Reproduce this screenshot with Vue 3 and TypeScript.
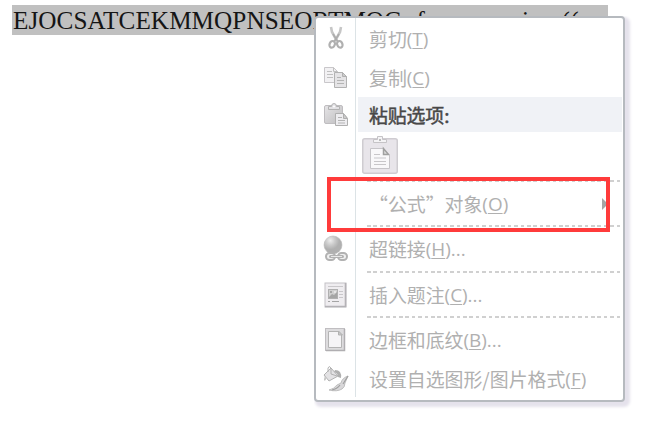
<script setup lang="ts">
interface Entry {
  kind: 'item' | 'header' | 'paste' | 'sep'
  icon?: string
  label?: string
  key?: string
  tail?: string
  height: number
  submenu?: boolean
}

const entries: Entry[] = [
  { kind: 'item', icon: 'cut', label: '剪切', key: 'T', height: 41 },
  { kind: 'item', icon: 'copy', label: '复制', key: 'C', height: 38 },
  { kind: 'header', icon: 'paste', label: '粘贴选项:', height: 35 },
  { kind: 'paste', height: 48 },
  { kind: 'sep', height: 2 },
  { kind: 'item', label: '“公式”对象', key: 'O', height: 43, submenu: true },
  { kind: 'sep', height: 2 },
  { kind: 'item', icon: 'link', label: '超链接', key: 'H', tail: '...', height: 44 },
  { kind: 'sep', height: 2 },
  { kind: 'item', icon: 'caption', label: '插入题注', key: 'C', tail: '...', height: 43 },
  { kind: 'sep', height: 2 },
  { kind: 'item', icon: 'border', label: '边框和底纹', key: 'B', tail: '...', height: 43 },
  { kind: 'item', icon: 'format', label: '设置自选图形/图片格式', key: 'F', height: 36 },
]
</script>

<template>
  <main class="page">
    <p class="doc"><span class="code">EJOCSATCEKMMQPNSEORTMOG</span><span class="tail">from evening ((</span></p>

    <div class="menu">
      <div
        v-for="(e, i) in entries"
        :key="i"
        class="row"
        :class="e.kind"
        :style="{ height: e.height + 'px' }"
      >
        <div class="gutter">
          <svg v-if="e.icon" class="icon" width="28" height="28" viewBox="0 0 28 28">
            <g v-if="e.icon === 'cut'" fill="none" stroke="#b0b0b0">
              <path d="M9 2l1 5 5 9M19 2l-1 5-5 9" stroke="#c6c6c6" stroke-width="2.600" />
              <path d="M11 9l5 8M17 9l-5 8" stroke="#adadad" stroke-width="1.500" />
              <ellipse cx="10.200" cy="19.300" rx="2.600" ry="3.400" stroke-width="2.200" transform="rotate(25 10.2 19.3)" />
              <ellipse cx="17.800" cy="19.300" rx="2.600" ry="3.400" stroke-width="2.200" transform="rotate(-25 17.8 19.3)" />
            </g>
            <g v-else-if="e.icon === 'copy'" stroke-width="1">
              <path d="M2.500 3.500h9l4 4v11h-13z" fill="#f2f1f3" stroke="#c9c7ca" />
              <path d="M11.500 3.500v4h4M5 7.500h5M5 10.500h6M5 13.500h6" fill="none" stroke="#c0c0c0" />
              <path d="M12.500 8.500h8l4 4v11h-12z" fill="#e5e4e6" stroke="#b2b2b2" />
              <path d="M20.500 8.500v4h4z" fill="#ccc" stroke="#b0b0b0" />
              <path d="M15 13.500h4M15 16.500h7M15 19.500h7" stroke="#b4b4b4" />
            </g>
            <g v-else-if="e.icon === 'paste'">
              <rect x="2.500" y="4.500" width="18" height="18" rx="1.500" fill="url(#metal)" stroke="#bfbdc0" />
              <path d="M6.500 8.500v-3h3q0-3 2.500-3t2.500 3h3v3z" fill="#e2e1e4" stroke="#b2b2b2" />
              <circle cx="12" cy="5.500" r="1" fill="#fff" />
              <path d="M13.500 12.500h8l4 5v7h-12z" fill="#eeedf0" stroke="#b0b0b0" />
              <path d="M21.500 12.500v5h4z" fill="#ccc" stroke="#b0b0b0" />
              <path d="M16 16.500h4M16 19.500h7M16 22h7" stroke="#b4b4b4" />
            </g>
            <g v-else-if="e.icon === 'link'">
              <circle cx="11" cy="10" r="9" fill="url(#ball)" stroke="#bbb" stroke-width=".6" />
              <g fill="#f0f0f0" stroke="#b2b2b2" stroke-width="2">
                <rect x="4" y="18" width="9" height="7" rx="3.500" />
                <rect x="16" y="18" width="9" height="7" rx="3.500" />
              </g>
              <path d="M8.500 21.500h12" stroke="#b2b2b2" stroke-width="3" stroke-linecap="round" />
              <path d="M9 21.500h11" stroke="#e8e8e8" />
            </g>
            <g v-else-if="e.icon === 'caption'">
              <rect x="3" y="2" width="21" height="24" fill="#efedf0" stroke="#c4c1c5" />
              <path d="M23.500 2v23.500H3" fill="none" stroke="#b4b2b6" stroke-width="1.600" />
              <path d="M6 5.500h15M17 10.500h4M17 13.500h4M17 16.500h4" stroke="#c9c7ca" />
              <rect x="6.500" y="8.500" width="9" height="9" fill="#d0d0d0" stroke="#b0b0b0" />
              <path d="M7 16l3-3 2 1 3-3v6H7z" fill="#a5a5a5" />
              <circle cx="9" cy="11" r="1" fill="#999" /><circle cx="13" cy="11" r="1" fill="#eee" />
              <path d="M6 20.500h2M10 20.500h7" stroke="#a5a5a5" />
            </g>
            <g v-else-if="e.icon === 'border'">
              <rect x="3.500" y="2.500" width="19" height="22" fill="#dddcde" stroke="#c0bec1" />
              <path d="M22.500 3v21.500H4" fill="none" stroke="#b0aeb1" stroke-width="1.500" />
              <path d="M6.500 5.500h10l3 3v13h-13z" fill="#f5f4f6" stroke="#b4b4b4" />
              <path d="M16.500 5v4h4z" fill="#c8c8c8" stroke="#b2b2b2" />
            </g>
            <g v-else>
              <path d="M2 10l7-7 7 8-9 5z" fill="#e3e2e4" stroke="#b2b2b2" />
              <path d="M6 7V3q1-3 3 0v6M9 9l6 2" fill="none" stroke="#b2b2b2" />
              <path d="M13 5q7 0 6 8l-3-1q0-4-4-5z" fill="#b0b0b0" />
              <path d="M3 10l-1 5q1 2 2-1z" fill="#c0c0c0" />
              <path d="M26 11q-6 2-7 7l-4 2q-3 4-8 5 8 2 13-1 3-2 3-6z" fill="#d8d7d9" stroke="#b2b2b2" stroke-width=".8" />
              <path d="M26 11l-5 8M10 25q5-1 8-5" fill="none" stroke="#a0a0a0" stroke-width="1.200" />
            </g>
          </svg>
        </div>
        <div class="body">
          <template v-if="e.kind === 'item'">
            <span class="label">{{ e.label }}</span><span>(<u>{{ e.key }}</u>){{ e.tail }}</span>
            <i v-if="e.submenu" class="arrow"></i>
          </template>
          <span v-else-if="e.kind === 'header'" class="label">{{ e.label }}</span>
          <div v-else-if="e.kind === 'paste'" class="paste-button">
            <svg width="36" height="38" viewBox="0 0 36 38">
              <defs>
                <linearGradient id="metal" x2="1" y2="1"><stop stop-color="#e6e5e7" /><stop offset="1" stop-color="#bebdbf" /></linearGradient>
                <radialGradient id="ball" cx=".35" cy=".25"><stop stop-color="#eee" /><stop offset=".5" stop-color="#ccc" /><stop offset="1" stop-color="#b0b0b0" /></radialGradient>
              </defs>
              <rect x=".750" y="2.750" width="34.500" height="34.500" rx="2" fill="#e8e5ea" stroke="#cfccd1" stroke-width="1.500" />
              <path d="M11.500 6.500v-3h4v-3h5v3h4v3z" fill="#f4f3f5" stroke="#c5c3c6" />
              <rect x="17" y="3" width="2" height="2" fill="#bbb" />
              <path d="M8.500 12.500h13l6 7v13h-19z" fill="#f9f8fa" stroke="#c6c4c8" />
              <path d="M21.500 12.500v6h5z" fill="#ddd" stroke="#a0a0a0" stroke-width="1.500" />
              <path d="M12 18.500h6M12 22h12M12 25.500h12M12 28.500h12" stroke="#c8c6c9" stroke-width="1.200" />
            </svg>
          </div>
          <div v-else class="dashes"></div>
        </div>
      </div>
    </div>
    <div class="highlight"></div>
  </main>
</template>

<style>
body { background: #fff; }
</style>

<style scoped>
.page { position: relative; width: 647px; height: 438px; overflow: hidden; padding: 5px 0 0 12px; box-sizing: border-box; }
.doc { display: flex; width: 596px; height: 30px; margin: 0; padding-left: 1px; box-sizing: border-box; background: #c0c0c0; color: #151515; font: 25.200px/31px "Liberation Serif", serif; white-space: nowrap; }
.code { letter-spacing: .08px; }
.tail { margin-left: 14px; letter-spacing: .3px; }
.menu { position: absolute; left: 314px; top: 16px; width: 311px; height: 386px; box-sizing: border-box; border: 2px solid #b6babf; border-radius: 4px; background: #fff; box-shadow: 3px 3px 3px 2px #e5e2ec; overflow: hidden; clip-path: inset(0 -9px -9px 0); color: #b0b0b0; font: 18.900px/24px "Open Sans", "Noto Sans CJK SC", sans-serif; }
.row { display: flex; }
.gutter { flex: none; display: flex; align-items: center; width: 33px; padding-left: 6px; border-right: 1px solid #dce3e6; }
.icon { display: block; }
.body { flex: 1; display: flex; align-items: center; padding-left: 13px; white-space: nowrap; }
.label { font-family: "Noto Sans CJK SC", sans-serif; }
u { text-decoration-thickness: 1px; text-underline-offset: 2px; }
.header .body { margin: 0 1px 0 2px; padding-left: 11px; background: #f0f2f6; color: #484848; }
.header .label { -webkit-text-stroke: .45px #484848; letter-spacing: -.1px; font-weight: 400; }
.paste .body { align-items: flex-start; padding: 4px 0 0 6px; }
.paste-button { height: 38px; }
.sep .body { padding: 0 2px 0 11px; }
.dashes { width: 100%; height: 2px; background: repeating-linear-gradient(90deg, #d0d0d0 0 3.600px, transparent 3.600px 6.400px); }
.arrow { margin-left: auto; margin-right: 15px; border: 6px solid transparent; border-left: 6px solid #a5a5a5; border-right: 0; }
.highlight { position: absolute; left: 327px; top: 177px; width: 283px; height: 55px; box-sizing: border-box; border: 4px solid #ff3b3b; }
</style>
